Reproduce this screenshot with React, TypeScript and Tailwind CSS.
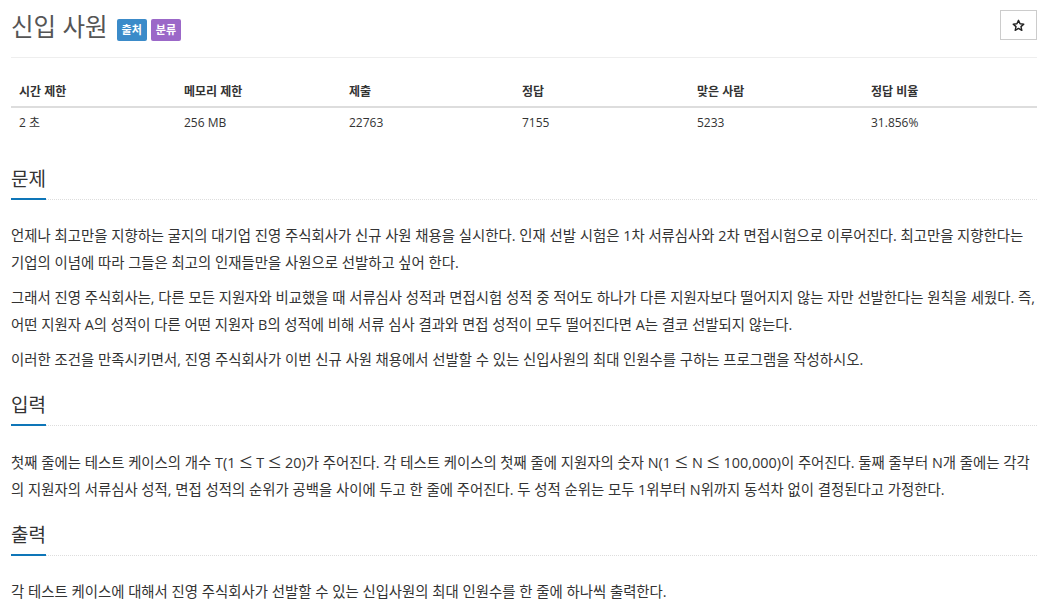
import React from 'react';

const font = { fontFamily: '"Open Sans", "Noto Sans CJK KR", sans-serif' };

const stats = [
  ['시간 제한', '2 초', 'w-[165px]'],
  ['메모리 제한', '256 MB', 'w-[165px]'],
  ['제출', '22763', 'w-[173px]'],
  ['정답', '7155', 'w-[175px]'],
  ['맞은 사람', '5233', 'w-[174px]'],
  ['정답 비율', '31.856%', ''],
];

function Le() {
  return <span className="font-['Noto_Sans_CJK_KR']"> ≤ </span>;
}

function Section({ title, className = 'mt-[18px]', children }: { title: string; className?: string; children: React.ReactNode }) {
  return (
    <section className={className}>
      <div className="flex items-end border-b border-dotted border-[#ddd]">
        <h2 className="-mb-px border-b-2 border-[#0e76b8] pb-[5px] text-[19px] leading-[28px] text-[#333]">
          {title}
        </h2>
      </div>
      <div className="mt-[22px] text-[14.4px] leading-[27px] text-[#333]">{children}</div>
    </section>
  );
}

export default function App() {
  return (
    <div className="min-h-[616px] bg-white px-[11px]" style={font}>
      <div className="flex items-start justify-between border-b border-[#eee] pt-[10px] pb-[15px]">
        <div className="flex items-center gap-[9px] pt-[2px]">
          <h1 className="text-[24.5px] leading-[30px] text-[#555]">신입 사원</h1>
          <div className="mt-[6px] flex gap-[4px]">
            <span className="rounded-[2px] bg-[#3b8bc9] px-[5px] py-[3px] text-[11px] font-bold leading-[16px] text-white">출처</span>
            <span className="rounded-[2px] bg-[#9b68c8] px-[5px] py-[3px] text-[11px] font-bold leading-[16px] text-white">분류</span>
          </div>
        </div>
        <button className="flex h-[30px] w-[37px] items-center justify-center border border-[#ccc] bg-white text-[#333]">
          <svg width="13" height="13" viewBox="0 0 24 24" fill="none" stroke="#222" strokeWidth="2.6" strokeLinejoin="round">
            <path d="M12 2.5l2.9 6.3 6.8.7-5.1 4.6 1.5 6.8L12 17.4l-6.1 3.5 1.5-6.8-5.1-4.6 6.8-.7z" />
          </svg>
        </button>
      </div>

      <table className="mt-[18px] w-full text-left text-[12px] text-[#333]">
        <thead>
          <tr className="border-b-2 border-[#ddd]">
            {stats.map(([h, , w]) => (
              <th key={h} className={`${w} px-[8px] pt-[7px] pb-[5px] font-bold`}>{h}</th>
            ))}
          </tr>
        </thead>
        <tbody>
          <tr>
            {stats.map(([h, v]) => (
              <td key={h} className="px-[8px] py-[6px]">{v}</td>
            ))}
          </tr>
        </tbody>
      </table>

      <Section title="문제" className="mt-[27px]">
        <p className="mb-[8px]">
          언제나 최고만을 지향하는 굴지의 대기업 진영 주식회사가 신규 사원 채용을 실시한다. 인재 선발 시험은 1차 서류심사와 2차 면접시험으로 이루어진다. 최고만을 지향한다는 기업의 이념에 따라 그들은 최고의 인재들만을 사원으로 선발하고 싶어 한다.
        </p>
        <p className="mb-[8px]">
          그래서 진영 주식회사는, 다른 모든 지원자와 비교했을 때 서류심사 성적과 면접시험 성적 중 적어도 하나가 다른 지원자보다 떨어지지 않는 자만 선발한다는 원칙을 세웠다. 즉, 어떤 지원자 A의 성적이 다른 어떤 지원자 B의 성적에 비해 서류 심사 결과와 면접 성적이 모두 떨어진다면 A는 결코 선발되지 않는다.
        </p>
        <p>
          이러한 조건을 만족시키면서, 진영 주식회사가 이번 신규 사원 채용에서 선발할 수 있는 신입사원의 최대 인원수를 구하는 프로그램을 작성하시오.
        </p>
      </Section>

      <Section title="입력">
        <p>
          첫째 줄에는 테스트 케이스의 개수 T(1<Le />T<Le />20)가 주어진다. 각 테스트 케이스의 첫째 줄에 지원자의 숫자 N(1<Le />N<Le />100,000)이 주어진다. 둘째 줄부터 N개 줄에는 각각의 지원자의 서류심사 성적, 면접 성적의 순위가 공백을 사이에 두고 한 줄에 주어진다. 두 성적 순위는 모두 1위부터 N위까지 동석차 없이 결정된다고 가정한다.
        </p>
      </Section>

      <Section title="출력">
        <p>각 테스트 케이스에 대해서 진영 주식회사가 선발할 수 있는 신입사원의 최대 인원수를 한 줄에 하나씩 출력한다.</p>
      </Section>
    </div>
  );
}
